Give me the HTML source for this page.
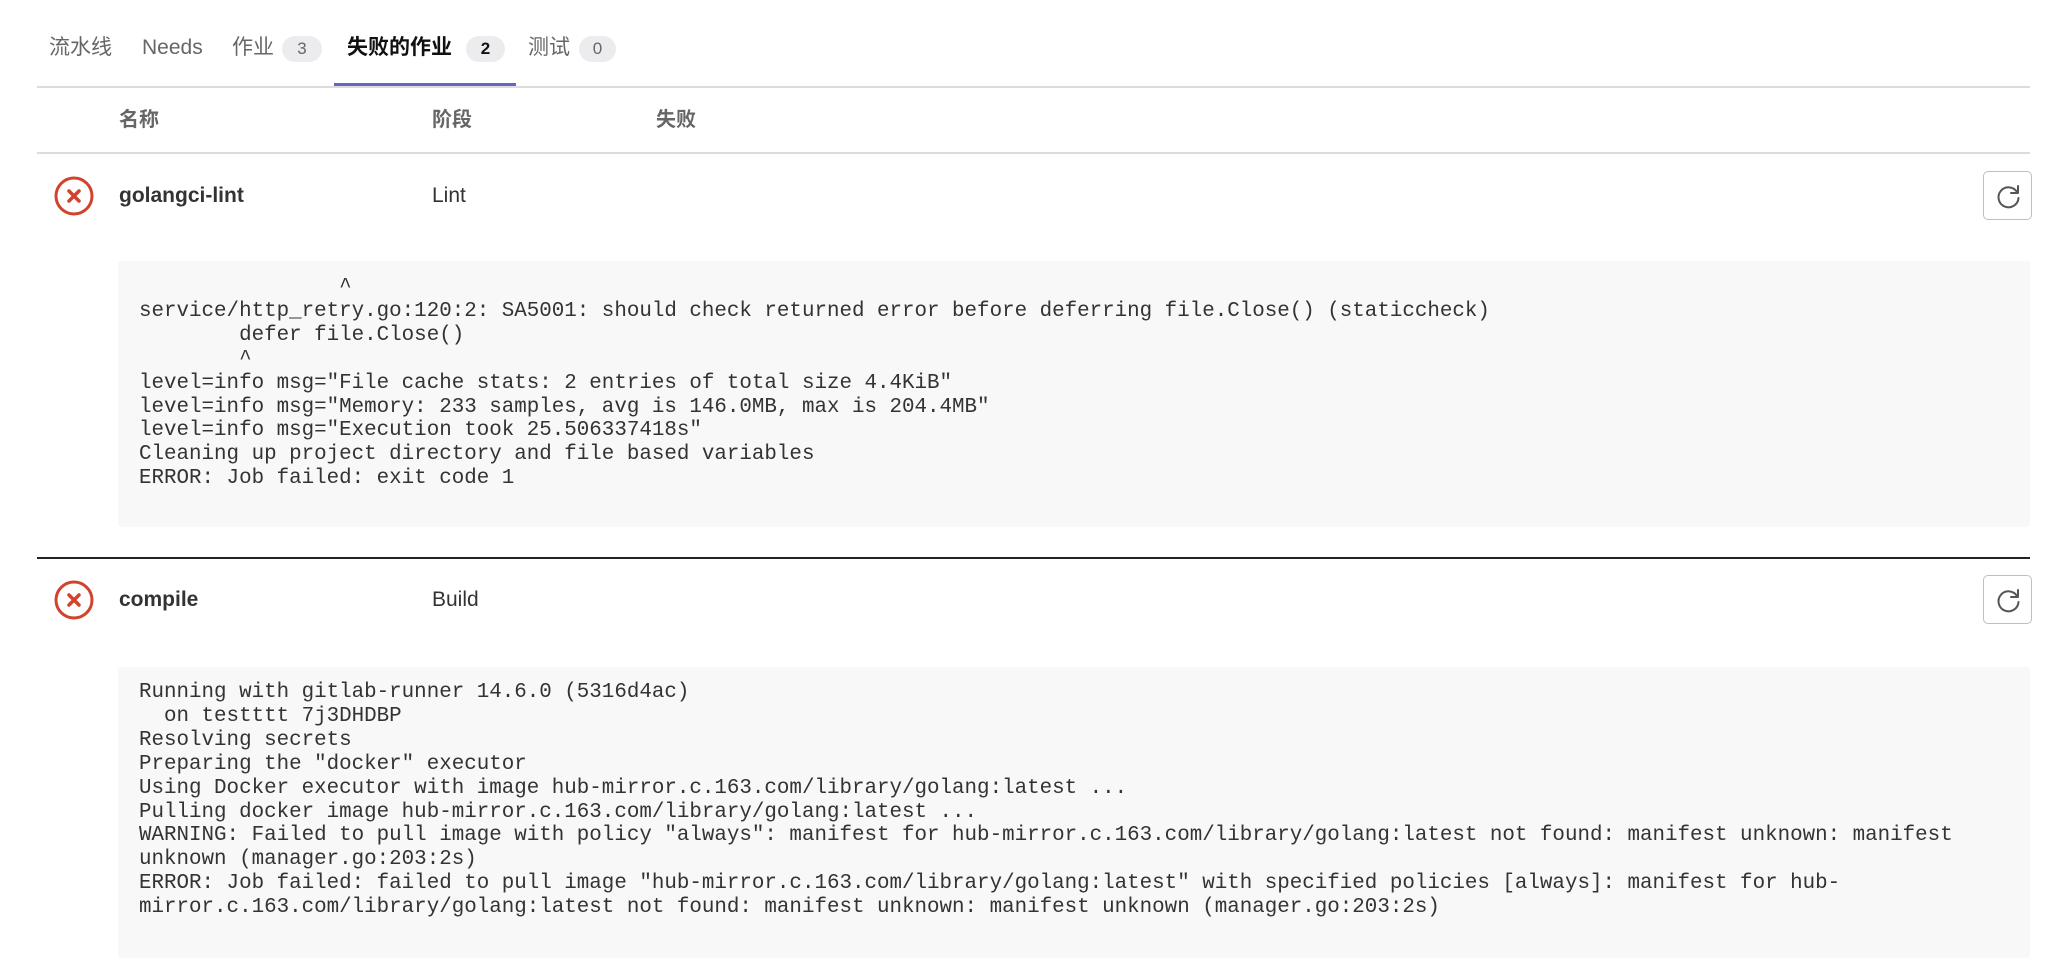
<!DOCTYPE html>
<html><head><meta charset="utf-8"><style>
*{margin:0;padding:0;box-sizing:border-box}
body{width:2060px;height:958px;background:#fff;position:relative;overflow:hidden;font-family:"Liberation Sans","Noto Sans CJK SC",sans-serif;color:#333}
.a{position:absolute;white-space:nowrap}
.tab{font-size:21px;color:#666;line-height:28px;top:34px}
.badge{position:absolute;top:36px;height:26px;border-radius:13px;background:#ececef;color:#666;font-size:17px;line-height:26px;text-align:center}
.hd{top:106px;font-size:20px;font-weight:bold;color:#666;line-height:28px}
.name{font-size:21px;font-weight:bold;color:#333;line-height:28px}
.stage{font-size:21px;color:#333;line-height:28px}
.icon{position:absolute;width:40px;height:40px}
.btn{position:absolute;width:49px;height:49px;border:1px solid #bfbfc3;border-radius:5px;background:#fff}
.btn svg{position:absolute;left:11px;top:11px}
.log{position:absolute;left:118px;width:1912px;background:#f8f8f8;border-radius:3px}
pre{position:absolute;left:21px;font-family:"Liberation Mono","DejaVu Sans Mono",monospace;font-size:20.85px;line-height:23.9px;color:#333;white-space:pre}
</style></head><body>
<div class="a tab" style="left:49px">流水线</div>
<div class="a tab" style="left:142px">Needs</div>
<div class="a tab" style="left:232px">作业</div>
<div class="badge" style="left:282px;width:40px">3</div>
<div class="a tab" style="left:347px;color:#111;font-weight:bold">失败的作业</div>
<div class="badge" style="left:466px;width:39px;color:#111;font-weight:bold">2</div>
<div class="a tab" style="left:528px">测试</div>
<div class="badge" style="left:579px;width:37px">0</div>
<div class="a" style="left:37px;top:86px;width:1993px;height:2px;background:#dcdcde"></div>
<div class="a" style="left:334px;top:83px;width:182px;height:3px;background:#6666c4"></div>

<div class="a hd" style="left:119px">名称</div>
<div class="a hd" style="left:432px">阶段</div>
<div class="a hd" style="left:656px">失败</div>
<div class="a" style="left:37px;top:152px;width:1993px;height:2px;background:#dcdcde"></div>

<svg class="icon" style="left:54px;top:176px" viewBox="0 0 40 40"><circle cx="20" cy="20" r="18" fill="none" stroke="#d2432c" stroke-width="3"/><path d="M15 15L25 25M25 15L15 25" stroke="#d2432c" stroke-width="3.5" stroke-linecap="round"/></svg>
<div class="a name" style="left:119px;top:182px">golangci-lint</div>
<div class="a stage" style="left:432px;top:182px">Lint</div>
<div class="btn" style="left:1983px;top:171px"><svg width="27" height="27" viewBox="0 0 27 27"><path d="M22 9A10 10 0 1 0 23.5 15" fill="none" stroke="#555" stroke-width="2" stroke-linecap="round"/><path d="M23 3V10H16" fill="none" stroke="#555" stroke-width="2" stroke-linecap="round" stroke-linejoin="round"/></svg></div>

<div class="log" style="top:261px;height:266px"><pre style="top:15px">                ^
service/http_retry.go:120:2: SA5001: should check returned error before deferring file.Close() (staticcheck)
        defer file.Close()
        ^
level=info msg="File cache stats: 2 entries of total size 4.4KiB"
level=info msg="Memory: 233 samples, avg is 146.0MB, max is 204.4MB"
level=info msg="Execution took 25.506337418s"
Cleaning up project directory and file based variables
ERROR: Job failed: exit code 1</pre></div>

<div class="a" style="left:37px;top:557px;width:1993px;height:2px;background:#222"></div>

<svg class="icon" style="left:54px;top:580px" viewBox="0 0 40 40"><circle cx="20" cy="20" r="18" fill="none" stroke="#d2432c" stroke-width="3"/><path d="M15 15L25 25M25 15L15 25" stroke="#d2432c" stroke-width="3.5" stroke-linecap="round"/></svg>
<div class="a name" style="left:119px;top:586px">compile</div>
<div class="a stage" style="left:432px;top:586px">Build</div>
<div class="btn" style="left:1983px;top:575px"><svg width="27" height="27" viewBox="0 0 27 27"><path d="M22 9A10 10 0 1 0 23.5 15" fill="none" stroke="#555" stroke-width="2" stroke-linecap="round"/><path d="M23 3V10H16" fill="none" stroke="#555" stroke-width="2" stroke-linecap="round" stroke-linejoin="round"/></svg></div>

<div class="log" style="top:667px;height:291px"><pre style="top:14px">Running with gitlab-runner 14.6.0 (5316d4ac)
  on testttt 7j3DHDBP
Resolving secrets
Preparing the "docker" executor
Using Docker executor with image hub-mirror.c.163.com/library/golang:latest ...
Pulling docker image hub-mirror.c.163.com/library/golang:latest ...
WARNING: Failed to pull image with policy "always": manifest for hub-mirror.c.163.com/library/golang:latest not found: manifest unknown: manifest
unknown (manager.go:203:2s)
ERROR: Job failed: failed to pull image "hub-mirror.c.163.com/library/golang:latest" with specified policies [always]: manifest for hub-
mirror.c.163.com/library/golang:latest not found: manifest unknown: manifest unknown (manager.go:203:2s)</pre></div>
</body></html>
